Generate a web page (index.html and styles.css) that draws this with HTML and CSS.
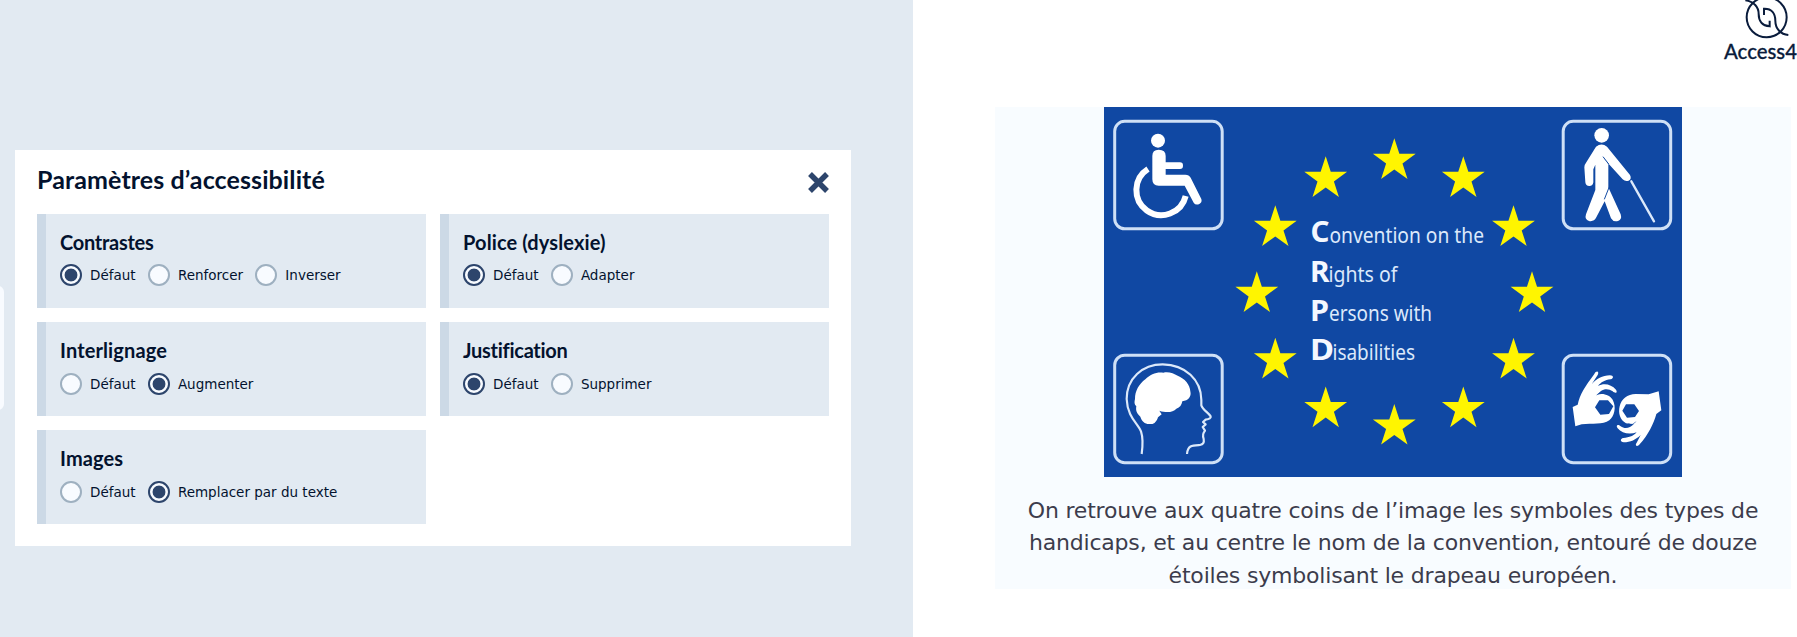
FILE: index.html
```html
<!DOCTYPE html>
<html lang="fr">
<head>
<meta charset="utf-8">
<title>Paramètres d’accessibilité</title>
<link rel="stylesheet" href="styles.css">
</head>
<body>
<main class="page">
  <section class="backdrop">
    <div class="side-tab"></div>
    <div class="modal">
      <header class="modal-head">
        <h1 class="modal-title">Paramètres d’accessibilité</h1>
        <button class="close" aria-label="Fermer"><svg width="21" height="21" viewBox="0 0 21 21"><path d="M2 2 19 19M19 2 2 19" stroke="#2d456c" stroke-width="5.4"/></svg></button>
      </header>
      <div class="cards">
        <fieldset class="card">
          <h2 class="card-title">Contrastes</h2>
          <div class="options">
            <label class="option"><span class="radio on"></span>Défaut</label>
            <label class="option"><span class="radio"></span>Renforcer</label>
            <label class="option"><span class="radio"></span>Inverser</label>
          </div>
        </fieldset>
        <fieldset class="card">
          <h2 class="card-title wide">Police (dyslexie)</h2>
          <div class="options">
            <label class="option"><span class="radio on"></span>Défaut</label>
            <label class="option"><span class="radio"></span>Adapter</label>
          </div>
        </fieldset>
        <fieldset class="card">
          <h2 class="card-title wide">Interlignage</h2>
          <div class="options">
            <label class="option"><span class="radio"></span>Défaut</label>
            <label class="option"><span class="radio on"></span>Augmenter</label>
          </div>
        </fieldset>
        <fieldset class="card">
          <h2 class="card-title">Justification</h2>
          <div class="options">
            <label class="option"><span class="radio on"></span>Défaut</label>
            <label class="option"><span class="radio"></span>Supprimer</label>
          </div>
        </fieldset>
        <fieldset class="card">
          <h2 class="card-title wide">Images</h2>
          <div class="options">
            <label class="option"><span class="radio"></span>Défaut</label>
            <label class="option"><span class="radio on"></span>Remplacer par du texte</label>
          </div>
        </fieldset>
      </div>
    </div>
  </section>
  <section class="content">
    <header class="topbar">
      <svg class="logo" width="117" height="107" viewBox="0 0 351 321">
        <g fill="none" stroke="#0a1c3c" stroke-width="6">
          <circle cx="260" cy="52" r="60"/>
          <path d="M196 1C222 4 236 22 236 42C236 62 246 78 269 79V62M325 105C303 103 286 87 286 62C286 40 275 25 252 26V45"/>
        </g>
        <text class="logo-text" x="132" y="178" textLength="219" lengthAdjust="spacingAndGlyphs">Access4</text>
      </svg>
    </header>
    <figure class="figure">
      <svg class="flag" width="578" height="370" viewBox="1104 107 578 370">
        <defs>
          <path id="star" d="M0 0 5.05 15.5H21.4L8.2 25.2 13.2 40.7 0 31.1-13.2 40.7-8.2 25.2-21.4 15.5H-5.05Z"/>
          <rect id="frame" width="107.5" height="107.5" rx="10" fill="none" stroke="#cfe0f6" stroke-width="3"/>
        </defs>
        <rect x="1104" y="107" width="578" height="370" fill="#1048a3"/>
        <use href="#frame" x="1114.7" y="121.3"/><use href="#frame" x="1563.2" y="121.3"/>
        <use href="#frame" x="1114.7" y="355.2"/><use href="#frame" x="1563.2" y="355.2"/>
        <g fill="#fff500">
          <use href="#star" x="1394.3" y="138.3"/>
          <use href="#star" x="1463.3" y="156.3"/>
          <use href="#star" x="1513.5" y="205.3"/>
          <use href="#star" x="1532" y="271.3"/>
          <use href="#star" x="1513.5" y="337.8"/>
          <use href="#star" x="1463.3" y="386.5"/>
          <use href="#star" x="1394.3" y="403.9"/>
          <use href="#star" x="1325.7" y="386.5"/>
          <use href="#star" x="1275.3" y="337.8"/>
          <use href="#star" x="1256.8" y="271.3"/>
          <use href="#star" x="1275.3" y="205.3"/>
          <use href="#star" x="1325.7" y="156.3"/>
        </g>
        <g class="initial">
          <text x="1310.5" y="242.4" textLength="19" lengthAdjust="spacingAndGlyphs">C</text>
          <text x="1310" y="282.2" textLength="19.5" lengthAdjust="spacingAndGlyphs">R</text>
          <text x="1310" y="321" textLength="19" lengthAdjust="spacingAndGlyphs">P</text>
          <text x="1310" y="360.3" textLength="24" lengthAdjust="spacingAndGlyphs">D</text>
        </g>
        <g class="word">
          <text x="1329.5" y="242.6" textLength="154.5" lengthAdjust="spacingAndGlyphs">onvention on the</text>
          <text x="1328.5" y="282.4" textLength="69" lengthAdjust="spacingAndGlyphs">ights of</text>
          <text x="1329" y="321" textLength="103" lengthAdjust="spacingAndGlyphs">ersons with</text>
          <text x="1332.5" y="360.3" textLength="82.5" lengthAdjust="spacingAndGlyphs">isabilities</text>
        </g>
        <!-- wheelchair -->
        <g transform="translate(1100 100) scale(.33333)" fill="none" stroke="#fff" stroke-linecap="round" stroke-linejoin="round">
          <circle cx="174" cy="122" r="21" fill="#fff" stroke="none"/>
          <path d="M157 168Q157 149 176 149Q197 149 197 168V187H240Q249 187 249 197Q249 207 240 207H197V224H256Q267 224 272 233L304 297Q307 307 298 312Q287 317 281 308L254 257H176Q157 257 157 238Z" fill="#fff" stroke="none"/>
          <path d="M144 207A75 75 0 1 0 257 288" stroke="#fff" stroke-width="18" stroke-linecap="butt"/>
        </g>
        <!-- walking with cane -->
        <g transform="translate(1550 100) scale(.33333)" fill="#fff">
          <circle cx="155" cy="106" r="22"/>
          <path d="M138 140Q155 127 171 140L240 225Q246 237 236 242Q226 246 218 238L160 174L175 192V262L212 343Q217 359 204 363Q190 367 183 355L164 304L139 352Q132 366 117 363Q103 359 108 343L136 270V194L130 208V247Q129 258 118 258Q107 258 106 247L103 202Q104 193 109 187Z"/>
          <path d="M159 170 176 192M178 260 163 298" fill="none" stroke="#1048a3" stroke-width="3"/>
          <path d="M244 244 312 364" fill="none" stroke="#dce9fa" stroke-width="7" stroke-linecap="round"/>
        </g>
        <!-- head profile with brain -->
        <g transform="translate(1100 345) scale(.33333)">
          <path d="M125 327Q131 283 123 259C113 235 82 216 80 162C80 100 127 58 188 58C257 59 303 105 304 164V181C308 194 326 204 332 214Q334 221 317 224L309 231L317 238L308 246L315 257Q306 266 311 282Q314 298 300 300C277 301 263 300 261 327" fill="none" stroke="#dce9fa" stroke-width="6.5" stroke-linejoin="round"/>
          <path d="M105 162C105 138 117 117 136 103C151 87 171 80 190 83C205 79 221 85 233 92C254 100 270 119 271 139C275 155 265 167 247 169C245 180 240 188 229 191C219 203 198 204 178 197L185 208L174 217C170 230 162 239 151 237C136 239 125 229 121 215C109 205 107 195 109 184C102 178 103 170 105 162Z" fill="#fff"/>
        </g>
        <!-- signing hands -->
        <g transform="translate(1550 345) scale(.33333)">
          <g fill="#fff">
            <path d="M68 186L83 179C90 148 104 126 133 87C139 75 149 79 143 90L125 118C139 102 157 91 180 91C191 91 192 101 182 103C164 105 153 112 144 123C162 113 184 118 198 134C204 143 196 147 188 139C177 131 163 131 153 138L141 149C160 143 179 150 188 164C200 187 193 213 178 226C158 240 127 235 95 238L76 244Z"/>
            <path d="M326 139L334 196L319 207C311 236 295 269 269 298C262 307 253 302 260 293L272 270C258 284 241 292 221 292C210 291 210 281 220 279C239 278 251 272 260 262C239 270 215 265 203 250C196 240 204 236 212 244C224 253 240 250 251 238L228 235C210 225 204 205 209 184C214 162 232 148 257 147L296 148Z"/>
          </g>
          <path d="M148 166H174L190 184L177 207L151 209L135 187ZM228 178H253L267 198L255 216L231 218L217 197Z" fill="#1048a3"/>
          <path d="M140 150 156 139M235 236Q248 243 257 230" fill="none" stroke="#1048a3" stroke-width="2"/>
        </g>
      </svg>
      <figcaption class="caption">On retrouve aux quatre coins de l’image les symboles des types de<br>handicaps, et au centre le nom de la convention, entouré de douze<br>étoiles symbolisant le drapeau européen.</figcaption>
    </figure>
  </section>
</main>
</body>
</html>
```
FILE: styles.css
```css
* { box-sizing: border-box; }
body { margin: 0; background: #fff; font-family: Verdana, "DejaVu Sans", sans-serif; color: #03122e; overflow: hidden; }
.page { display: grid; grid-template-columns: 913px 1fr; height: 637px; }
.backdrop { position: relative; background: #e2eaf2; padding: 150px 62px 91px 15px; }
.side-tab { position: absolute; left: -10px; top: 286px; width: 14px; height: 124px; border-radius: 6px; background: #f8fbff; }
.modal { height: 396px; background: #fff; padding: 0 22px; }
.modal-head { display: flex; justify-content: space-between; align-items: flex-start; height: 63.5px; }
.modal-title { margin: 14px 0 0; font: 700 25px/30px Lato, sans-serif; letter-spacing: .1px; white-space: nowrap; }
.close { margin: 22px 0 0; padding: 0; border: 0; background: none; height: 21px; line-height: 0; }
.cards { display: grid; grid-template-columns: 389px 389px; gap: 14.3px 14px; grid-auto-rows: 94px; }
.card { margin: 0; min-width: 0; border: 0; border-left: 9px solid #ccd9e6; background: #e2eaf2; padding: 16.4px 0 0 14px; }
.card-title { margin: 0; font: 700 20px/24px Lato, sans-serif; letter-spacing: -.27px; }
.card-title.wide { letter-spacing: .12px; }
.options { display: flex; gap: 12.3px; margin-top: 10px; }
.option { display: flex; align-items: center; gap: 8px; font-size: 13.5px; line-height: 22px; height: 23px; white-space: nowrap; }
.radio { width: 22px; height: 22px; border-radius: 50%; border: 2px solid #9eb0c0; background: #f8fbff; }
.radio.on { border-color: #2d456c; background: radial-gradient(circle, #2d456c 6px, #f8fbff 6.8px); }
.content { display: flex; flex-direction: column; }
.topbar { display: flex; justify-content: flex-end; height: 107px; }
.logo-text { font: 500 61px Lato, sans-serif; fill: #0a1c3c; stroke: #0a1c3c; stroke-width: .8; }
.figure { margin: 0 6px 0 82px; height: 482px; background: #f8fcff; display: flex; flex-direction: column; align-items: center; }
.flag { display: block; flex: none; }
.initial { font: 700 29px "Noto Sans", sans-serif; fill: #f4f8ff; }
.word { font: 400 21px "Noto Sans", sans-serif; fill: #dce9fb; }
.caption { flex: none; margin-top: 18px; font-size: 22px; line-height: 32.3px; letter-spacing: -.19px; text-align: center; white-space: nowrap; color: #3c3c4c; }
```
